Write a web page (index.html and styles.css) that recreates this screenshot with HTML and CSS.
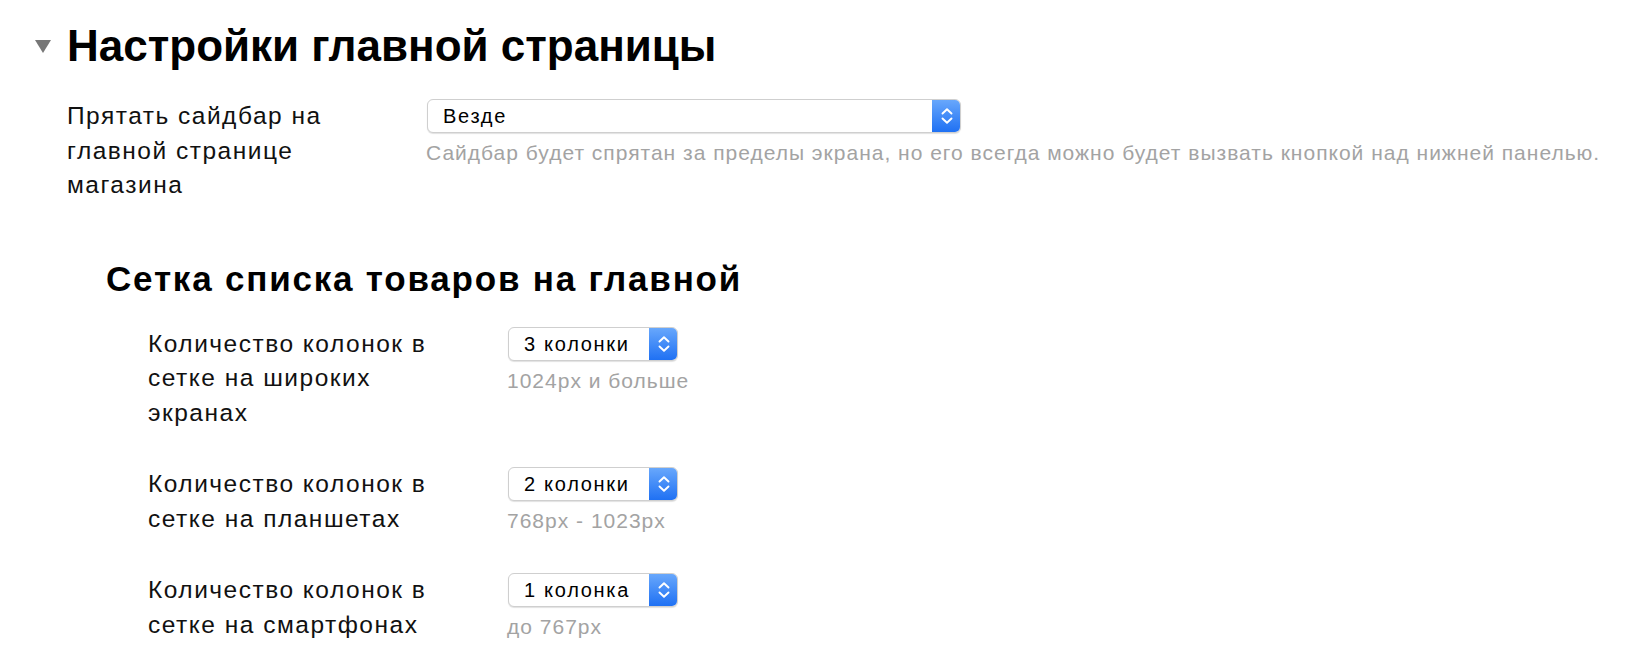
FILE: index.html
```html
<!DOCTYPE html>
<html lang="ru">
<head>
<meta charset="utf-8">
<title>Настройки главной страницы</title>
<link rel="stylesheet" href="styles.css">
</head>
<body>
<section class="settings">
  <h1 class="title"><span class="caret"></span>Настройки главной страницы</h1>

  <div class="field">
    <div class="label">Прятать сайдбар на главной странице магазина</div>
    <div class="control">
      <div class="select select-wide">
        <span class="value">Везде</span>
        <span class="arrows"><svg viewBox="0 0 14 18" width="14" height="18"><path d="M2.5 6.5 L7 2.2 L11.5 6.5 M2.5 11.5 L7 15.8 L11.5 11.5" fill="none" stroke="#fff" stroke-width="1.9" stroke-linecap="round" stroke-linejoin="round"/></svg></span>
      </div>
      <p class="hint">Сайдбар будет спрятан за пределы экрана, но его всегда можно будет вызвать кнопкой над нижней панелью.</p>
    </div>
  </div>

  <section class="subsection">
    <h2 class="subtitle">Сетка списка товаров на главной</h2>

    <div class="field">
      <div class="label">Количество колонок в сетке на широких экранах</div>
      <div class="control">
        <div class="select select-narrow">
          <span class="value">3 колонки</span>
          <span class="arrows"><svg viewBox="0 0 14 18" width="14" height="18"><path d="M2.5 6.5 L7 2.2 L11.5 6.5 M2.5 11.5 L7 15.8 L11.5 11.5" fill="none" stroke="#fff" stroke-width="1.9" stroke-linecap="round" stroke-linejoin="round"/></svg></span>
        </div>
        <p class="hint">1024px и больше</p>
      </div>
    </div>

    <div class="field">
      <div class="label">Количество колонок в сетке на планшетах</div>
      <div class="control">
        <div class="select select-narrow">
          <span class="value">2 колонки</span>
          <span class="arrows"><svg viewBox="0 0 14 18" width="14" height="18"><path d="M2.5 6.5 L7 2.2 L11.5 6.5 M2.5 11.5 L7 15.8 L11.5 11.5" fill="none" stroke="#fff" stroke-width="1.9" stroke-linecap="round" stroke-linejoin="round"/></svg></span>
        </div>
        <p class="hint">768px - 1023px</p>
      </div>
    </div>

    <div class="field">
      <div class="label">Количество колонок в сетке на смартфонах</div>
      <div class="control">
        <div class="select select-narrow">
          <span class="value">1 колонка</span>
          <span class="arrows"><svg viewBox="0 0 14 18" width="14" height="18"><path d="M2.5 6.5 L7 2.2 L11.5 6.5 M2.5 11.5 L7 15.8 L11.5 11.5" fill="none" stroke="#fff" stroke-width="1.9" stroke-linecap="round" stroke-linejoin="round"/></svg></span>
        </div>
        <p class="hint">до 767px</p>
      </div>
    </div>
  </section>
</section>
</body>
</html>
```

FILE: styles.css
```css
html, body {
  margin: 0;
  padding: 0;
  background: #ffffff;
}

body {
  font-family: "Liberation Sans", Arial, Helvetica, sans-serif;
  color: #000;
}

.settings {
  padding: 18px 0 0 67px;
}

.title {
  position: relative;
  margin: 0 0 25px 0;
  font-size: 44px;
  font-weight: bold;
  line-height: 56px;
  letter-spacing: 0;
}

.caret {
  position: absolute;
  left: -32px;
  top: 22px;
  width: 0;
  height: 0;
  border-left: 8px solid transparent;
  border-right: 8px solid transparent;
  border-top: 13px solid #777;
}

.field {
  display: flex;
  align-items: flex-start;
  margin-bottom: 37px;
}

.label {
  width: 300px;
  flex: none;
  margin-right: 60px;
  font-size: 24.5px;
  line-height: 34.5px;
  letter-spacing: 1.5px;
  color: #111;
}

.control {
  display: flex;
  flex-direction: column;
  align-items: flex-start;
}

.select {
  display: flex;
  align-items: stretch;
  height: 34px;
  box-sizing: border-box;
  border: 1px solid #cfcfcf;
  border-radius: 6px;
  box-shadow: 0 1px 1px rgba(0, 0, 0, 0.12);
  background: #fff;
  overflow: hidden;
}

.select-wide {
  width: 534px;
}

.select-narrow {
  width: 170px;
}

.value {
  flex: 1;
  padding-left: 15px;
  font-size: 20px;
  line-height: 32px;
  letter-spacing: 1.7px;
}

.arrows {
  width: 29px;
  flex: none;
  display: flex;
  align-items: center;
  justify-content: center;
  background: linear-gradient(#6aa9fc, #1d6ff3);
  margin: -1px -1px -1px 0;
}

.hint {
  margin: 7px 0 0 -1px;
  font-size: 21px;
  line-height: 26px;
  letter-spacing: 1px;
  color: #a3a3a3;
}

.subsection {
  padding-left: 39px;
  margin-top: 56px;
}

.subtitle {
  margin: 0 0 28px 0;
  font-size: 35px;
  font-weight: bold;
  line-height: 40px;
  letter-spacing: 1.8px;
}

.subsection .field {
  padding-left: 42px;
}
```
